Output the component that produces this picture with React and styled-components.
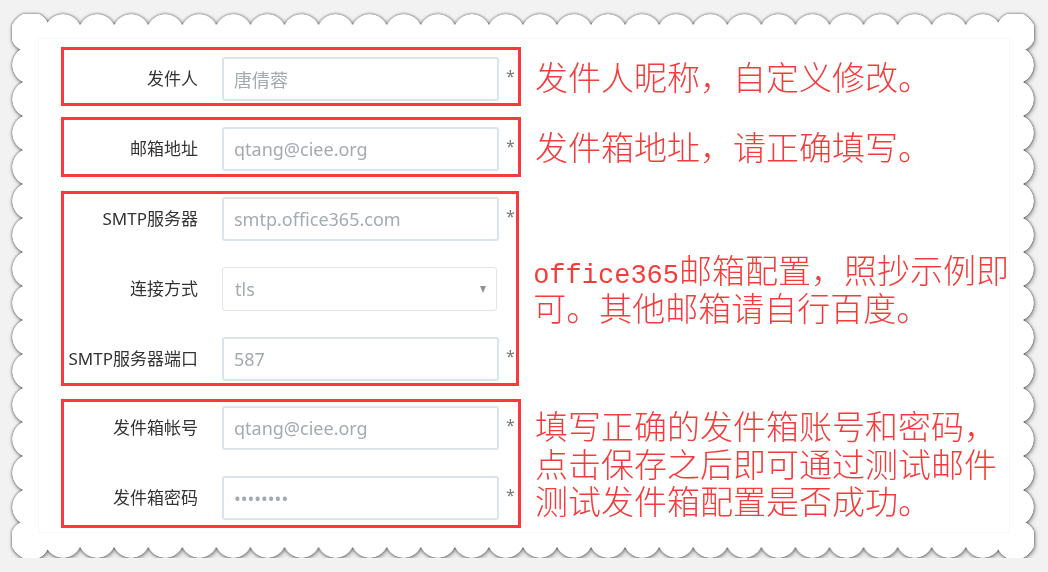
import React from "react";
import styled, { createGlobalStyle } from "styled-components";

const GlobalStyle = createGlobalStyle`
  html, body {
    margin: 0;
    background: #f2f2f2;
  }
  body {
    font-family: "Noto Sans", "Noto Sans CJK SC", sans-serif;
  }
  #root {
    padding: 14px 0 0 12px;
  }
`;

const scallop = "radial-gradient(circle 19px at 50% 50%, #000 18.4px, transparent 19px)";

const Frame = styled.div`
  width: 1022px;
  filter: drop-shadow(0 0 1.4px rgba(0, 0, 0, 0.6)) drop-shadow(1px 2px 2px rgba(0, 0, 0, 0.3));
`;

const Paper = styled.div`
  box-sizing: border-box;
  width: 1022px;
  height: 544px;
  padding: 24px 0 0 26px;
  background: #fff;
  -webkit-mask-image: linear-gradient(#000, #000), ${scallop}, ${scallop}, ${scallop}, ${scallop};
  -webkit-mask-position: center, left top, left bottom, left top, right top;
  -webkit-mask-size: calc(100% - 38px) calc(100% - 38px), 34px 38px, 34px 38px, 38px 34px, 38px 34px;
  -webkit-mask-repeat: no-repeat, round no-repeat, round no-repeat, no-repeat round, no-repeat round;
  mask-image: linear-gradient(#000, #000), ${scallop}, ${scallop}, ${scallop}, ${scallop};
  mask-position: center, left top, left bottom, left top, right top;
  mask-size: calc(100% - 38px) calc(100% - 38px), 34px 38px, 34px 38px, 38px 34px, 38px 34px;
  mask-repeat: no-repeat, round no-repeat, round no-repeat, no-repeat round, no-repeat round;
`;

const Sheet = styled.div`
  box-sizing: border-box;
  width: 972px;
  height: 495px;
  border: 1px solid #f8f8f8;
  padding: 8px 0 0 22px;
  display: flex;
  flex-direction: column;
`;

const Section = styled.div`
  display: flex;
  align-items: center;
  margin-top: ${p => p.$mt || 0}px;
`;

const Mark = styled.div`
  box-sizing: border-box;
  width: 460px;
  border: 3px solid #f73b3b;
  padding: ${p => p.$pad};
  display: flex;
  flex-direction: column;
  gap: 26px;
`;

const Row = styled.div`
  display: flex;
  align-items: center;
  height: 44px;
`;

const Label = styled.div`
  width: 134px;
  margin-right: 24px;
  padding-bottom: 3px;
  display: flex;
  justify-content: flex-end;
  overflow: hidden;
  white-space: nowrap;
  font-size: 17px;
  color: #333;
`;

const Input = styled.input`
  box-sizing: border-box;
  width: 277px;
  height: 44px;
  margin: 0;
  padding: 0 10px;
  border: 2px solid #dbe3eb;
  border-radius: 3px;
  background: #fff;
  outline: none;
  font-family: "Noto Sans", "Noto Sans CJK SC", sans-serif;
  font-size: 18px;
  color: #a3aab1;
`;

const Select = styled.div`
  box-sizing: border-box;
  width: 275px;
  height: 44px;
  padding: 0 10px 0 12px;
  border: 1px solid #dfe5eb;
  border-radius: 3px;
  display: flex;
  align-items: center;
  justify-content: space-between;
  font-size: 18px;
  color: #a3aab1;
`;

const Caret = styled.span`
  width: 0;
  height: 0;
  border-left: 3.5px solid transparent;
  border-right: 3.5px solid transparent;
  border-top: 7px solid #8d9399;
`;

const Star = styled.span`
  margin: 0 0 6px 7px;
  font-size: 16px;
  color: #777;
`;

const Note = styled.div`
  margin-left: 14px;
  display: flex;
  flex-direction: column;
  font-family: "Noto Sans CJK SC", sans-serif;
  font-weight: 300;
  font-size: 33px;
  color: #f43c3c;
`;

const Line = styled.div`
  height: 37.5px;
  line-height: 37.5px;
  white-space: nowrap;
`;

const Mono = styled.span`
  font-family: "Liberation Mono", monospace;
  font-size: 27px;
`;

function Field({ label, value, type = "text", required = true }) {
  return (
    <Row>
      <Label>{label}</Label>
      <Input type={type} value={value} readOnly />
      {required && <Star>*</Star>}
    </Row>
  );
}

export default function App() {
  return (
    <>
      <GlobalStyle />
      <Frame>
        <Paper>
          <Sheet>
            <Section>
              <Mark $pad="7px 0 2px">
                <Field label="发件人" value="唐倩蓉" />
              </Mark>
              <Note>
                <Line>发件人昵称，自定义修改。</Line>
              </Note>
            </Section>

            <Section $mt={11}>
              <Mark $pad="7px 0 3px">
                <Field label="邮箱地址" value="qtang@ciee.org" />
              </Mark>
              <Note>
                <Line>发件箱地址，请正确填写。</Line>
              </Note>
            </Section>

            <Section $mt={14}>
              <Mark $pad="3px 0 2px">
                <Field label="SMTP服务器" value="smtp.office365.com" />
                <Row>
                  <Label>连接方式</Label>
                  <Select>
                    <span>tls</span>
                    <Caret />
                  </Select>
                </Row>
                <Field label="SMTP服务器端口" value="587" />
              </Mark>
              <Note>
                <Line><Mono>office365</Mono>邮箱配置，照抄示例即</Line>
                <Line>可。其他邮箱请自行百度。</Line>
              </Note>
            </Section>

            <Section $mt={13}>
              <Mark $pad="4px 0 5px">
                <Field label="发件箱帐号" value="qtang@ciee.org" />
                <Field label="发件箱密码" value="12345678" type="password" />
              </Mark>
              <Note>
                <Line>填写正确的发件箱账号和密码，</Line>
                <Line>点击保存之后即可通过测试邮件</Line>
                <Line>测试发件箱配置是否成功。</Line>
              </Note>
            </Section>
          </Sheet>
        </Paper>
      </Frame>
    </>
  );
}
